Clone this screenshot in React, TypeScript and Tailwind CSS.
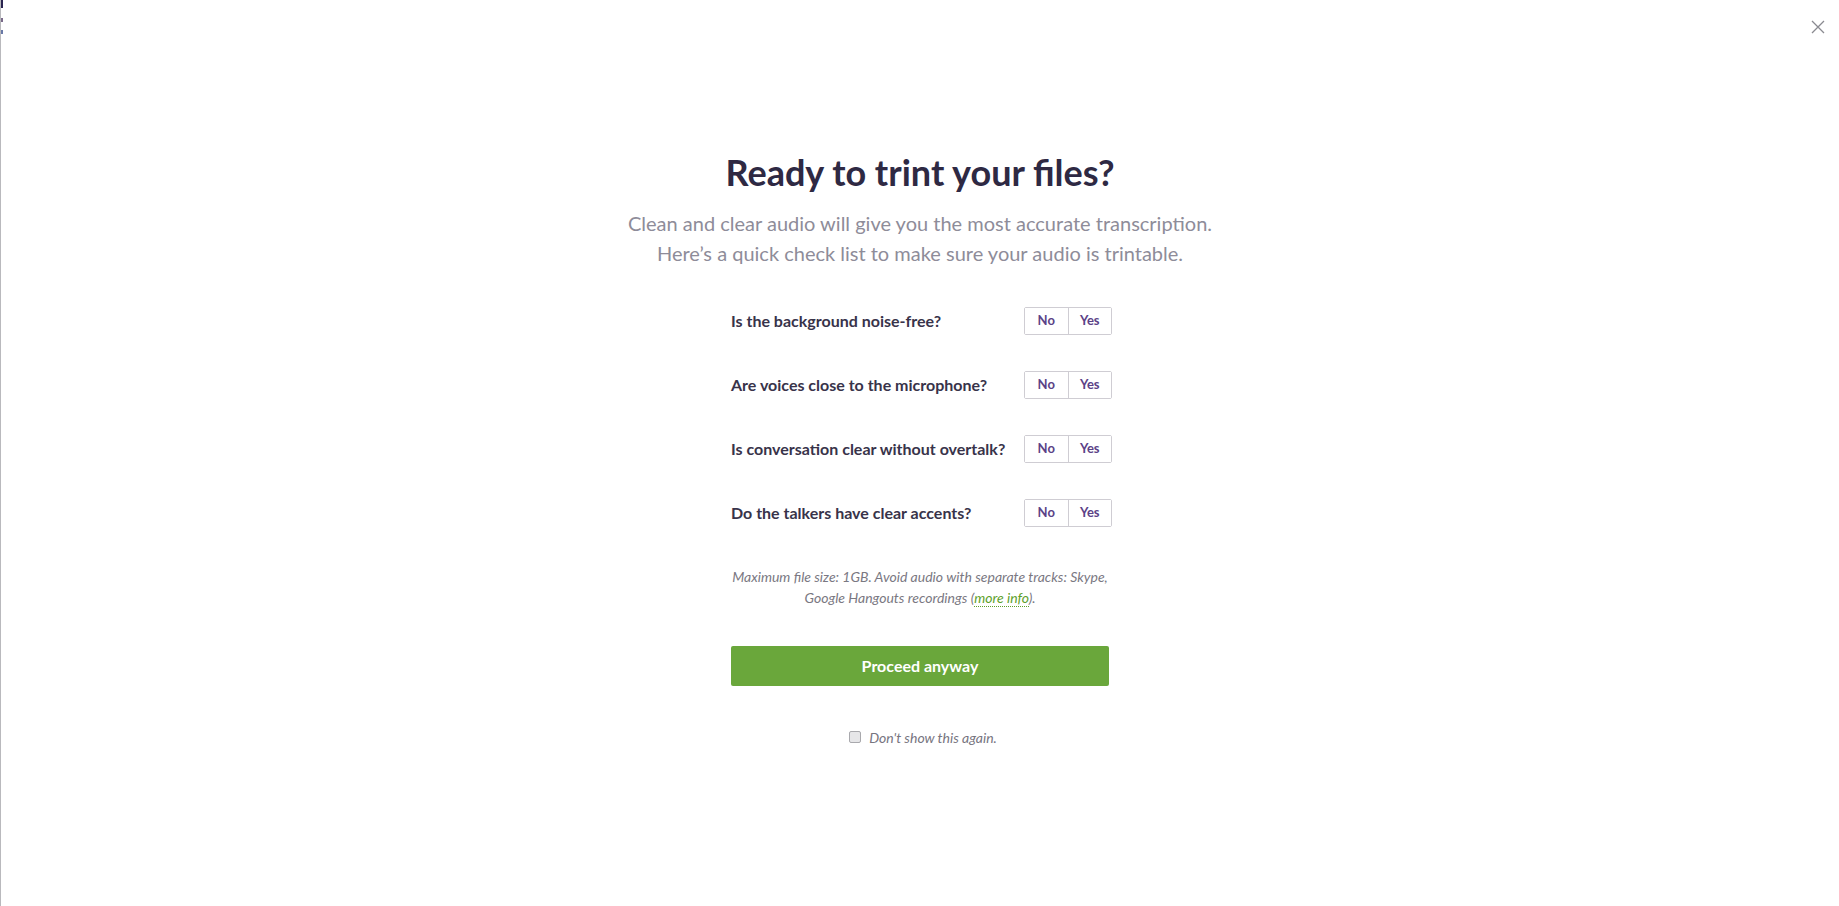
import React, { useState } from 'react';

const questions = [
  'Is the background noise-free?',
  'Are voices close to the microphone?',
  'Is conversation clear without overtalk?',
  'Do the talkers have clear accents?',
];

const YesNo: React.FC<{ value: string | null; onChange: (v: string) => void }> = ({ value, onChange }) => {
  return (
    <div className="flex h-[28px] w-[88px] border border-[#cfcdd3] rounded-[2px] text-[13px] font-bold text-[#5b4287]">
      <button
        onClick={() => onChange('no')}
        className={`flex-1 flex items-center justify-center border-r border-[#cfcdd3] ${value === 'no' ? 'bg-[#f1eef6]' : 'bg-white'}`}
      >
        No
      </button>
      <button
        onClick={() => onChange('yes')}
        className={`flex-1 flex items-center justify-center ${value === 'yes' ? 'bg-[#f1eef6]' : 'bg-white'}`}
      >
        Yes
      </button>
    </div>
  );
};

export default function App() {
  const [answers, setAnswers] = useState<Record<number, string>>({});
  const [dontShow, setDontShow] = useState(false);

  return (
    <div className="relative w-full h-[906px] bg-white border-l border-[#b9b9bd] overflow-hidden font-['Lato','Open_Sans',sans-serif]">
      {/* bits of the page behind, left edge */}
      <div className="absolute left-0 top-0 w-[2px] h-[8px] bg-[#2a2550]" />
      <div className="absolute left-0 top-[18px] w-[2px] h-[4px] bg-[#7a6a8a]" />
      <div className="absolute left-0 top-[30px] w-[2px] h-[4px] bg-[#6a7aa8]" />

      {/* close */}
      <button className="absolute right-[14px] top-[20px] w-[14px] h-[14px] text-[#8a8a90]">
        <svg viewBox="0 0 14 14" width="14" height="14" fill="none" stroke="currentColor" strokeWidth="1.3">
          <path d="M1 1 L13 13 M13 1 L1 13" />
        </svg>
      </button>

      <div className="flex flex-col items-center pt-[152px]">
        <h1 className="text-[36px] leading-[40px] font-bold text-[#2e2943]">
          Ready to trint your files?
        </h1>
        <p className="mt-[16px] text-[20px] leading-[30px] text-[#8e8c99] text-center">
          Clean and clear audio will give you the most accurate transcription.
          <br />
          Here’s a quick check list to make sure your audio is trintable.
        </p>

        <div className="w-[381px] mt-[21px] ml-[3px]">
          {questions.map((q, i) => (
            <div key={q} className="h-[64px] flex items-center justify-between">
              <span className="text-[16px] font-bold text-[#38334a]">{q}</span>
              <YesNo value={answers[i] ?? null} onChange={(v) => setAnswers({ ...answers, [i]: v })} />
            </div>
          ))}
        </div>

        <p className="mt-[21px] w-[420px] text-center text-[14px] leading-[21px] italic text-[#7a7882]">
          Maximum file size: 1GB. Avoid audio with separate tracks: Skype,
          <br />
          Google Hangouts recordings (
          <a className="text-[#5e9f2c] border-b border-dotted border-[#5e9f2c]">more info</a>
          ).
        </p>

        <button className="mt-[38px] w-[378px] h-[40px] rounded-[2px] bg-[#6aa73b] text-white text-[16px] font-bold">
          Proceed anyway
        </button>

        <label className="mt-[41px] ml-[6px] h-[20px] flex items-center gap-[8px] text-[14px] italic text-[#77757f]">
          <input
            type="checkbox"
            checked={dontShow}
            onChange={(e) => setDontShow(e.target.checked)}
            className="appearance-none w-[12px] h-[12px] rounded-[2px] border border-[#a9a9ad] bg-[#e6e6e8] checked:bg-[#6aa73b]"
          />
          Don't show this again.
        </label>
      </div>
    </div>
  );
}
